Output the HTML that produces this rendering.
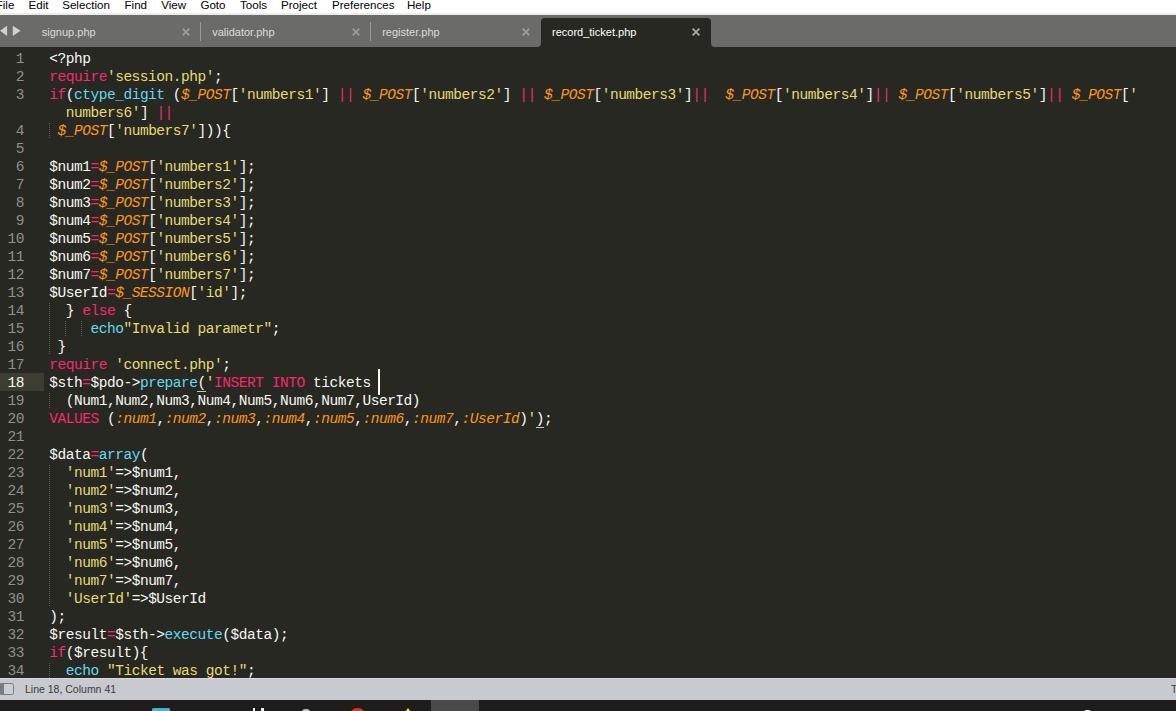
<!DOCTYPE html>
<html><head><meta charset="utf-8"><style>
*{margin:0;padding:0;box-sizing:border-box}
html,body{width:1176px;height:711px;overflow:hidden;background:#272822;position:relative}
body{font-family:"Liberation Sans",sans-serif}
#menu{position:absolute;left:0;top:0;width:1176px;height:13px;background:#fff}
#menuline{position:absolute;left:0;top:13px;width:1176px;height:2px;background:#ececec}
.mi{position:absolute;top:-2px;font-size:11.6px;line-height:14px;color:#000;white-space:pre}
#tabbar{position:absolute;left:0;top:15px;width:1176px;height:32px;background:#6b6c67}
.tt{position:absolute;top:25px;font-size:11px;line-height:14px;color:#dcdcd8;white-space:pre}
.xs{position:absolute;top:28.2px}
.sep{position:absolute;top:22px;width:1px;height:19px;background:#9a9a96}
#atab{position:absolute;left:541px;top:18px;width:170px;height:29px;background:#272822;border-radius:4px 4px 0 0}
#editor{position:absolute;left:0;top:47px;width:1176px;height:631px;background:#272822;overflow:hidden}
.row{position:absolute;left:49.2px;height:18px;line-height:18px;font-family:"Liberation Mono",monospace;font-size:14.5px;letter-spacing:-0.459px;white-space:pre;color:#F8F8F2}
.ln{position:absolute;left:0;width:24px;text-align:right;height:18px;line-height:18px;font-family:"Liberation Mono",monospace;font-size:14.5px;letter-spacing:-0.459px;color:#90908A}
.ln.cur{color:#F8F8F2}
#curln{position:absolute;left:0;top:373px;width:44px;height:18px;background:#3E3D32}
.guide{position:absolute;width:1px;background:repeating-linear-gradient(to bottom,#5c5c54 0 1px,transparent 1px 2px)}
#cursor{position:absolute;left:378px;top:369px;width:2px;height:26px;background:#F8F8F0}
.ul{position:absolute;height:1px;background:#c9c9c2}
#status{position:absolute;left:0;top:678px;width:1176px;height:22px;background:#c8cad0}
#sttext{position:absolute;left:25px;top:681.5px;font-size:10.5px;line-height:14px;color:#3a3a3a;white-space:pre}
#taskbar{position:absolute;left:0;top:700px;width:1176px;height:11px;background:#1e1d1c}
</style></head><body>
<div id="menu"></div><div id="menuline"></div>
<div class="mi" style="left:-4.3px">File</div><div class="mi" style="left:28.6px">Edit</div><div class="mi" style="left:62.2px">Selection</div><div class="mi" style="left:124.5px">Find</div><div class="mi" style="left:161.2px">View</div><div class="mi" style="left:200.4px">Goto</div><div class="mi" style="left:240.0px">Tools</div><div class="mi" style="left:281.0px">Project</div><div class="mi" style="left:332.0px">Preferences</div><div class="mi" style="left:407.0px">Help</div>
<div id="tabbar"></div>
<svg style="position:absolute;left:0;top:25px" width="22" height="12" viewBox="0 0 22 12"><path d="M0 5.8L7.1 0.7V10.9Z M12.8 0.7L20.7 5.8L12.8 10.9Z" fill="#cfcfcd"/></svg>
<div class="tt" style="left:41.8px">signup.php</div><svg class="xs" style="left:181.6px" width="8" height="8" viewBox="0 0 8 8"><path d="M0.7 0.7L7.3 7.3M7.3 0.7L0.7 7.3" stroke="#9b9b98" stroke-width="1.9"/></svg><div class="sep" style="left:200.0px"></div><div class="tt" style="left:212.2px">validator.php</div><svg class="xs" style="left:351.6px" width="8" height="8" viewBox="0 0 8 8"><path d="M0.7 0.7L7.3 7.3M7.3 0.7L0.7 7.3" stroke="#9b9b98" stroke-width="1.9"/></svg><div class="sep" style="left:370.0px"></div><div class="tt" style="left:382.2px">register.php</div><svg class="xs" style="left:521.6px" width="8" height="8" viewBox="0 0 8 8"><path d="M0.7 0.7L7.3 7.3M7.3 0.7L0.7 7.3" stroke="#9b9b98" stroke-width="1.9"/></svg>
<div id="atab"></div>
<div style="position:absolute;left:537px;top:43px;width:4px;height:4px;background:#272822"></div>
<div style="position:absolute;left:533px;top:39px;width:8px;height:8px;background:#6b6c67;border-radius:0 0 4px 0"></div>
<div style="position:absolute;left:711px;top:43px;width:4px;height:4px;background:#272822"></div>
<div style="position:absolute;left:711px;top:39px;width:8px;height:8px;background:#6b6c67;border-radius:0 0 0 4px"></div>
<div class="tt" style="left:552px;color:#fff">record_ticket.php</div>
<svg class="xs" style="left:691.8px" width="8" height="8" viewBox="0 0 8 8"><path d="M0.7 0.7L7.3 7.3M7.3 0.7L0.7 7.3" stroke="#a8a8a4" stroke-width="1.9"/></svg>
<div id="curln"></div>
<div class="ln" style="top:50px">1</div>
<div class="ln" style="top:68px">2</div>
<div class="ln" style="top:86px">3</div>
<div class="ln" style="top:122px">4</div>
<div class="ln" style="top:140px">5</div>
<div class="ln" style="top:158px">6</div>
<div class="ln" style="top:176px">7</div>
<div class="ln" style="top:194px">8</div>
<div class="ln" style="top:212px">9</div>
<div class="ln" style="top:230px">10</div>
<div class="ln" style="top:248px">11</div>
<div class="ln" style="top:266px">12</div>
<div class="ln" style="top:284px">13</div>
<div class="ln" style="top:302px">14</div>
<div class="ln" style="top:320px">15</div>
<div class="ln" style="top:338px">16</div>
<div class="ln" style="top:356px">17</div>
<div class="ln cur" style="top:374px">18</div>
<div class="ln" style="top:392px">19</div>
<div class="ln" style="top:410px">20</div>
<div class="ln" style="top:428px">21</div>
<div class="ln" style="top:446px">22</div>
<div class="ln" style="top:464px">23</div>
<div class="ln" style="top:482px">24</div>
<div class="ln" style="top:500px">25</div>
<div class="ln" style="top:518px">26</div>
<div class="ln" style="top:536px">27</div>
<div class="ln" style="top:554px">28</div>
<div class="ln" style="top:572px">29</div>
<div class="ln" style="top:590px">30</div>
<div class="ln" style="top:608px">31</div>
<div class="ln" style="top:626px">32</div>
<div class="ln" style="top:644px">33</div>
<div class="ln" style="top:662px">34</div>
<div class="guide" style="left:49px;top:123px;height:15px"></div>
<div class="guide" style="left:49px;top:303px;height:51px"></div>
<div class="guide" style="left:65px;top:321px;height:15px"></div>
<div class="guide" style="left:81px;top:321px;height:15px"></div>
<div class="guide" style="left:49px;top:393px;height:15px"></div>
<div class="guide" style="left:49px;top:465px;height:141px"></div>
<div class="guide" style="left:49px;top:663px;height:15px"></div>
<div class="row" style="top:50px"><span style="color:#F8F8F2">&lt;?php</span></div>
<div class="row" style="top:68px"><span style="color:#F92672">require</span><span style="color:#E6DB74">'session.php'</span><span style="color:#F8F8F2">;</span></div>
<div class="row" style="top:86px"><span style="color:#F92672">if</span><span style="color:#F8F8F2">(</span><span style="color:#66D9EF">ctype_digit</span><span style="color:#F8F8F2"> (</span><span style="color:#FD971F;font-style:italic">$_POST</span><span style="color:#F8F8F2">[</span><span style="color:#E6DB74">'numbers1'</span><span style="color:#F8F8F2">]</span><span style="color:#F8F8F2"> </span><span style="color:#F92672">||</span><span style="color:#F8F8F2"> </span><span style="color:#FD971F;font-style:italic">$_POST</span><span style="color:#F8F8F2">[</span><span style="color:#E6DB74">'numbers2'</span><span style="color:#F8F8F2">]</span><span style="color:#F8F8F2"> </span><span style="color:#F92672">||</span><span style="color:#F8F8F2"> </span><span style="color:#FD971F;font-style:italic">$_POST</span><span style="color:#F8F8F2">[</span><span style="color:#E6DB74">'numbers3'</span><span style="color:#F8F8F2">]</span><span style="color:#F92672">||</span><span style="color:#F8F8F2">  </span><span style="color:#FD971F;font-style:italic">$_POST</span><span style="color:#F8F8F2">[</span><span style="color:#E6DB74">'numbers4'</span><span style="color:#F8F8F2">]</span><span style="color:#F92672">||</span><span style="color:#F8F8F2"> </span><span style="color:#FD971F;font-style:italic">$_POST</span><span style="color:#F8F8F2">[</span><span style="color:#E6DB74">'numbers5'</span><span style="color:#F8F8F2">]</span><span style="color:#F92672">||</span><span style="color:#F8F8F2"> </span><span style="color:#FD971F;font-style:italic">$_POST</span><span style="color:#F8F8F2">[</span><span style="color:#E6DB74">'</span></div>
<div class="row" style="top:104px"><span style="color:#F8F8F2">  </span><span style="color:#E6DB74">numbers6'</span><span style="color:#F8F8F2">]</span><span style="color:#F8F8F2"> </span><span style="color:#F92672">||</span></div>
<div class="row" style="top:122px"><span style="color:#F8F8F2"> </span><span style="color:#FD971F;font-style:italic">$_POST</span><span style="color:#F8F8F2">[</span><span style="color:#E6DB74">'numbers7'</span><span style="color:#F8F8F2">])){</span></div>
<div class="row" style="top:140px"></div>
<div class="row" style="top:158px"><span style="color:#F8F8F2">$num1</span><span style="color:#F92672">=</span><span style="color:#FD971F;font-style:italic">$_POST</span><span style="color:#F8F8F2">[</span><span style="color:#E6DB74">'numbers1'</span><span style="color:#F8F8F2">];</span></div>
<div class="row" style="top:176px"><span style="color:#F8F8F2">$num2</span><span style="color:#F92672">=</span><span style="color:#FD971F;font-style:italic">$_POST</span><span style="color:#F8F8F2">[</span><span style="color:#E6DB74">'numbers2'</span><span style="color:#F8F8F2">];</span></div>
<div class="row" style="top:194px"><span style="color:#F8F8F2">$num3</span><span style="color:#F92672">=</span><span style="color:#FD971F;font-style:italic">$_POST</span><span style="color:#F8F8F2">[</span><span style="color:#E6DB74">'numbers3'</span><span style="color:#F8F8F2">];</span></div>
<div class="row" style="top:212px"><span style="color:#F8F8F2">$num4</span><span style="color:#F92672">=</span><span style="color:#FD971F;font-style:italic">$_POST</span><span style="color:#F8F8F2">[</span><span style="color:#E6DB74">'numbers4'</span><span style="color:#F8F8F2">];</span></div>
<div class="row" style="top:230px"><span style="color:#F8F8F2">$num5</span><span style="color:#F92672">=</span><span style="color:#FD971F;font-style:italic">$_POST</span><span style="color:#F8F8F2">[</span><span style="color:#E6DB74">'numbers5'</span><span style="color:#F8F8F2">];</span></div>
<div class="row" style="top:248px"><span style="color:#F8F8F2">$num6</span><span style="color:#F92672">=</span><span style="color:#FD971F;font-style:italic">$_POST</span><span style="color:#F8F8F2">[</span><span style="color:#E6DB74">'numbers6'</span><span style="color:#F8F8F2">];</span></div>
<div class="row" style="top:266px"><span style="color:#F8F8F2">$num7</span><span style="color:#F92672">=</span><span style="color:#FD971F;font-style:italic">$_POST</span><span style="color:#F8F8F2">[</span><span style="color:#E6DB74">'numbers7'</span><span style="color:#F8F8F2">];</span></div>
<div class="row" style="top:284px"><span style="color:#F8F8F2">$UserId</span><span style="color:#F92672">=</span><span style="color:#FD971F;font-style:italic">$_SESSION</span><span style="color:#F8F8F2">[</span><span style="color:#E6DB74">'id'</span><span style="color:#F8F8F2">];</span></div>
<div class="row" style="top:302px"><span style="color:#F8F8F2">  } </span><span style="color:#F92672">else</span><span style="color:#F8F8F2"> {</span></div>
<div class="row" style="top:320px"><span style="color:#F8F8F2">     </span><span style="color:#66D9EF">echo</span><span style="color:#E6DB74">"Invalid parametr"</span><span style="color:#F8F8F2">;</span></div>
<div class="row" style="top:338px"><span style="color:#F8F8F2"> }</span></div>
<div class="row" style="top:356px"><span style="color:#F92672">require</span><span style="color:#F8F8F2"> </span><span style="color:#E6DB74">'connect.php'</span><span style="color:#F8F8F2">;</span></div>
<div class="row" style="top:374px"><span style="color:#F8F8F2">$sth</span><span style="color:#F92672">=</span><span style="color:#F8F8F2">$pdo-&gt;</span><span style="color:#66D9EF">prepare</span><span style="color:#F8F8F2">(</span><span style="color:#E6DB74">'</span><span style="color:#F92672">INSERT INTO</span><span style="color:#F8F8F2"> tickets </span></div>
<div class="row" style="top:392px"><span style="color:#F8F8F2">  (Num1,Num2,Num3,Num4,Num5,Num6,Num7,UserId)</span></div>
<div class="row" style="top:410px"><span style="color:#F92672">VALUES</span><span style="color:#F8F8F2"> (</span><span style="color:#FD971F;font-style:italic">:num1</span><span style="color:#F8F8F2">,</span><span style="color:#FD971F;font-style:italic">:num2</span><span style="color:#F8F8F2">,</span><span style="color:#FD971F;font-style:italic">:num3</span><span style="color:#F8F8F2">,</span><span style="color:#FD971F;font-style:italic">:num4</span><span style="color:#F8F8F2">,</span><span style="color:#FD971F;font-style:italic">:num5</span><span style="color:#F8F8F2">,</span><span style="color:#FD971F;font-style:italic">:num6</span><span style="color:#F8F8F2">,</span><span style="color:#FD971F;font-style:italic">:num7</span><span style="color:#F8F8F2">,</span><span style="color:#FD971F;font-style:italic">:UserId</span><span style="color:#F8F8F2">)</span><span style="color:#E6DB74">'</span><span style="color:#F8F8F2">)</span><span style="color:#F8F8F2">;</span></div>
<div class="row" style="top:428px"></div>
<div class="row" style="top:446px"><span style="color:#F8F8F2">$data</span><span style="color:#F92672">=</span><span style="color:#66D9EF">array</span><span style="color:#F8F8F2">(</span></div>
<div class="row" style="top:464px"><span style="color:#F8F8F2">  </span><span style="color:#E6DB74">'num1'</span><span style="color:#F8F8F2">=&gt;$num1,</span></div>
<div class="row" style="top:482px"><span style="color:#F8F8F2">  </span><span style="color:#E6DB74">'num2'</span><span style="color:#F8F8F2">=&gt;$num2,</span></div>
<div class="row" style="top:500px"><span style="color:#F8F8F2">  </span><span style="color:#E6DB74">'num3'</span><span style="color:#F8F8F2">=&gt;$num3,</span></div>
<div class="row" style="top:518px"><span style="color:#F8F8F2">  </span><span style="color:#E6DB74">'num4'</span><span style="color:#F8F8F2">=&gt;$num4,</span></div>
<div class="row" style="top:536px"><span style="color:#F8F8F2">  </span><span style="color:#E6DB74">'num5'</span><span style="color:#F8F8F2">=&gt;$num5,</span></div>
<div class="row" style="top:554px"><span style="color:#F8F8F2">  </span><span style="color:#E6DB74">'num6'</span><span style="color:#F8F8F2">=&gt;$num6,</span></div>
<div class="row" style="top:572px"><span style="color:#F8F8F2">  </span><span style="color:#E6DB74">'num7'</span><span style="color:#F8F8F2">=&gt;$num7,</span></div>
<div class="row" style="top:590px"><span style="color:#F8F8F2">  </span><span style="color:#E6DB74">'UserId'</span><span style="color:#F8F8F2">=&gt;$UserId</span></div>
<div class="row" style="top:608px"><span style="color:#F8F8F2">);</span></div>
<div class="row" style="top:626px"><span style="color:#F8F8F2">$result</span><span style="color:#F92672">=</span><span style="color:#F8F8F2">$sth-&gt;</span><span style="color:#66D9EF">execute</span><span style="color:#F8F8F2">($data);</span></div>
<div class="row" style="top:644px"><span style="color:#F92672">if</span><span style="color:#F8F8F2">($result){</span></div>
<div class="row" style="top:662px"><span style="color:#F8F8F2">  </span><span style="color:#66D9EF">echo</span><span style="color:#F8F8F2"> </span><span style="color:#E6DB74">"Ticket was got!"</span><span style="color:#F8F8F2">;</span></div>
<div id="cursor"></div>
<div class="ul" style="left:197px;top:391px;width:9px"></div>
<div class="ul" style="left:536px;top:427px;width:8px"></div>
<div id="status"></div><div style="position:absolute;left:0;top:678px;width:1176px;height:1px;background:#d6d8dd"></div>
<div style="position:absolute;left:-2px;top:683px;width:16px;height:12px;border:1.1px solid #7b7c7e;border-radius:2.5px;background:linear-gradient(to right,#7b7c7e 0 5.5px,#cdcfd5 5.5px)"></div>
<div id="sttext">Line 18, Column 41</div>
<div id="taskbar"></div>
<div style="position:absolute;left:431px;top:700px;width:48px;height:11px;background:#4a4948"></div>
<div style="position:absolute;left:152px;top:708px;width:18px;height:5px;border:1px solid #8a8f94;border-radius:1px;background:#22c4ee"></div>
<div style="position:absolute;left:253px;top:708px;width:11px;height:4px;background:linear-gradient(to right,#eee 0 2px,transparent 2px 8px,#eee 8px)"></div>
<div style="position:absolute;left:302px;top:709px;width:8px;height:3px;background:#bdbdbd;border-radius:3px 3px 0 0"></div>
<div style="position:absolute;left:348.5px;top:707.5px;width:17.5px;height:17.5px;border-radius:50%;background:#e0332a"></div>
<div style="position:absolute;left:405px;top:708px;width:0;height:0;border-left:3.5px solid transparent;border-right:3.5px solid transparent;border-bottom:4px solid #f2d421"></div>
<div style="position:absolute;left:1083px;top:709.5px;width:9px;height:4px;background:#f0f0f0;border-radius:4px 4px 0 0"></div>
<div style="position:absolute;left:1171px;top:681.5px;font-size:10.5px;line-height:14px;color:#3a3a3a">T</div>
</body></html>
